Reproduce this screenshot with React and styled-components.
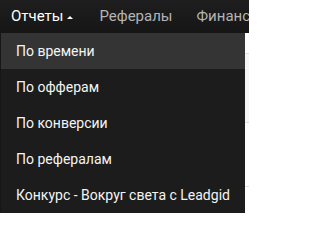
import React from "react";
import styled, { createGlobalStyle } from "styled-components";

const Global = createGlobalStyle`
  html, body { margin: 0; padding: 0; background: #ffffff; }
  body { font-family: Roboto, "Liberation Sans", Arial, sans-serif; overflow: hidden; }
`;

const Page = styled.div`
  width: 249px;
  height: 215px;
  position: relative;
  overflow: hidden;
  background: #ffffff;
`;

const NavBar = styled.nav`
  height: 33px;
  background: linear-gradient(#1e1e1e, #161616);
  display: flex;
  align-items: center;
  padding-left: 11px;
  gap: 24px;
  white-space: nowrap;
`;

const NavItem = styled.span`
  font-size: 15px;
  color: ${(p) => (p.$active ? "#ffffff" : "#b4b4b4")};
  display: flex;
  align-items: center;
  line-height: 1;
  flex-shrink: 0;
`;

const Caret = styled.span`
  width: 0;
  height: 0;
  border-left: 3px solid transparent;
  border-right: 3px solid transparent;
  border-bottom: 3px solid #ffffff;
  margin: 1px 2px 0 4px;
`;

const Content = styled.div`
  display: flex;
  flex-direction: column;
`;

const Row = styled.div`
  height: ${(p) => p.$h}px;
  background: ${(p) => p.$bg};
  border-bottom: 1px solid #e3e3e3;
`;

const Dropdown = styled.ul`
  position: absolute;
  top: 33px;
  left: 0;
  width: 245px;
  margin: 0;
  padding: 0;
  list-style: none;
  background: #1c1c1c;
  border-left: 1px solid #161616;
  box-sizing: border-box;
`;

const MenuItem = styled.li`
  height: 36px;
  display: flex;
  align-items: center;
  padding-left: 15px;
  font-size: 14px;
  color: #f4f4f4;
  background: ${(p) => (p.$hover ? "#343434" : "transparent")};
  white-space: nowrap;
`;

const items = [
  "По времени",
  "По офферам",
  "По конверсии",
  "По рефералам",
  "Конкурс - Вокруг света с Leadgid",
];

export default function App() {
  return (
    <Page>
      <Global />
      <NavBar>
        <NavItem $active>
          Отчеты<Caret />
        </NavItem>
        <NavItem>Рефералы</NavItem>
        <NavItem>Финансы</NavItem>
      </NavBar>
      <Content>
        <Row $h={20} $bg="#ffffff" />
        <Row $h={68} $bg="#f6f6f6" />
        <Row $h={63} $bg="#ffffff" />
        <Row $h={40} $bg="#ffffff" />
      </Content>
      <Dropdown>
        {items.map((t, i) => (
          <MenuItem key={t} $hover={i === 0}>
            {t}
          </MenuItem>
        ))}
      </Dropdown>
    </Page>
  );
}
